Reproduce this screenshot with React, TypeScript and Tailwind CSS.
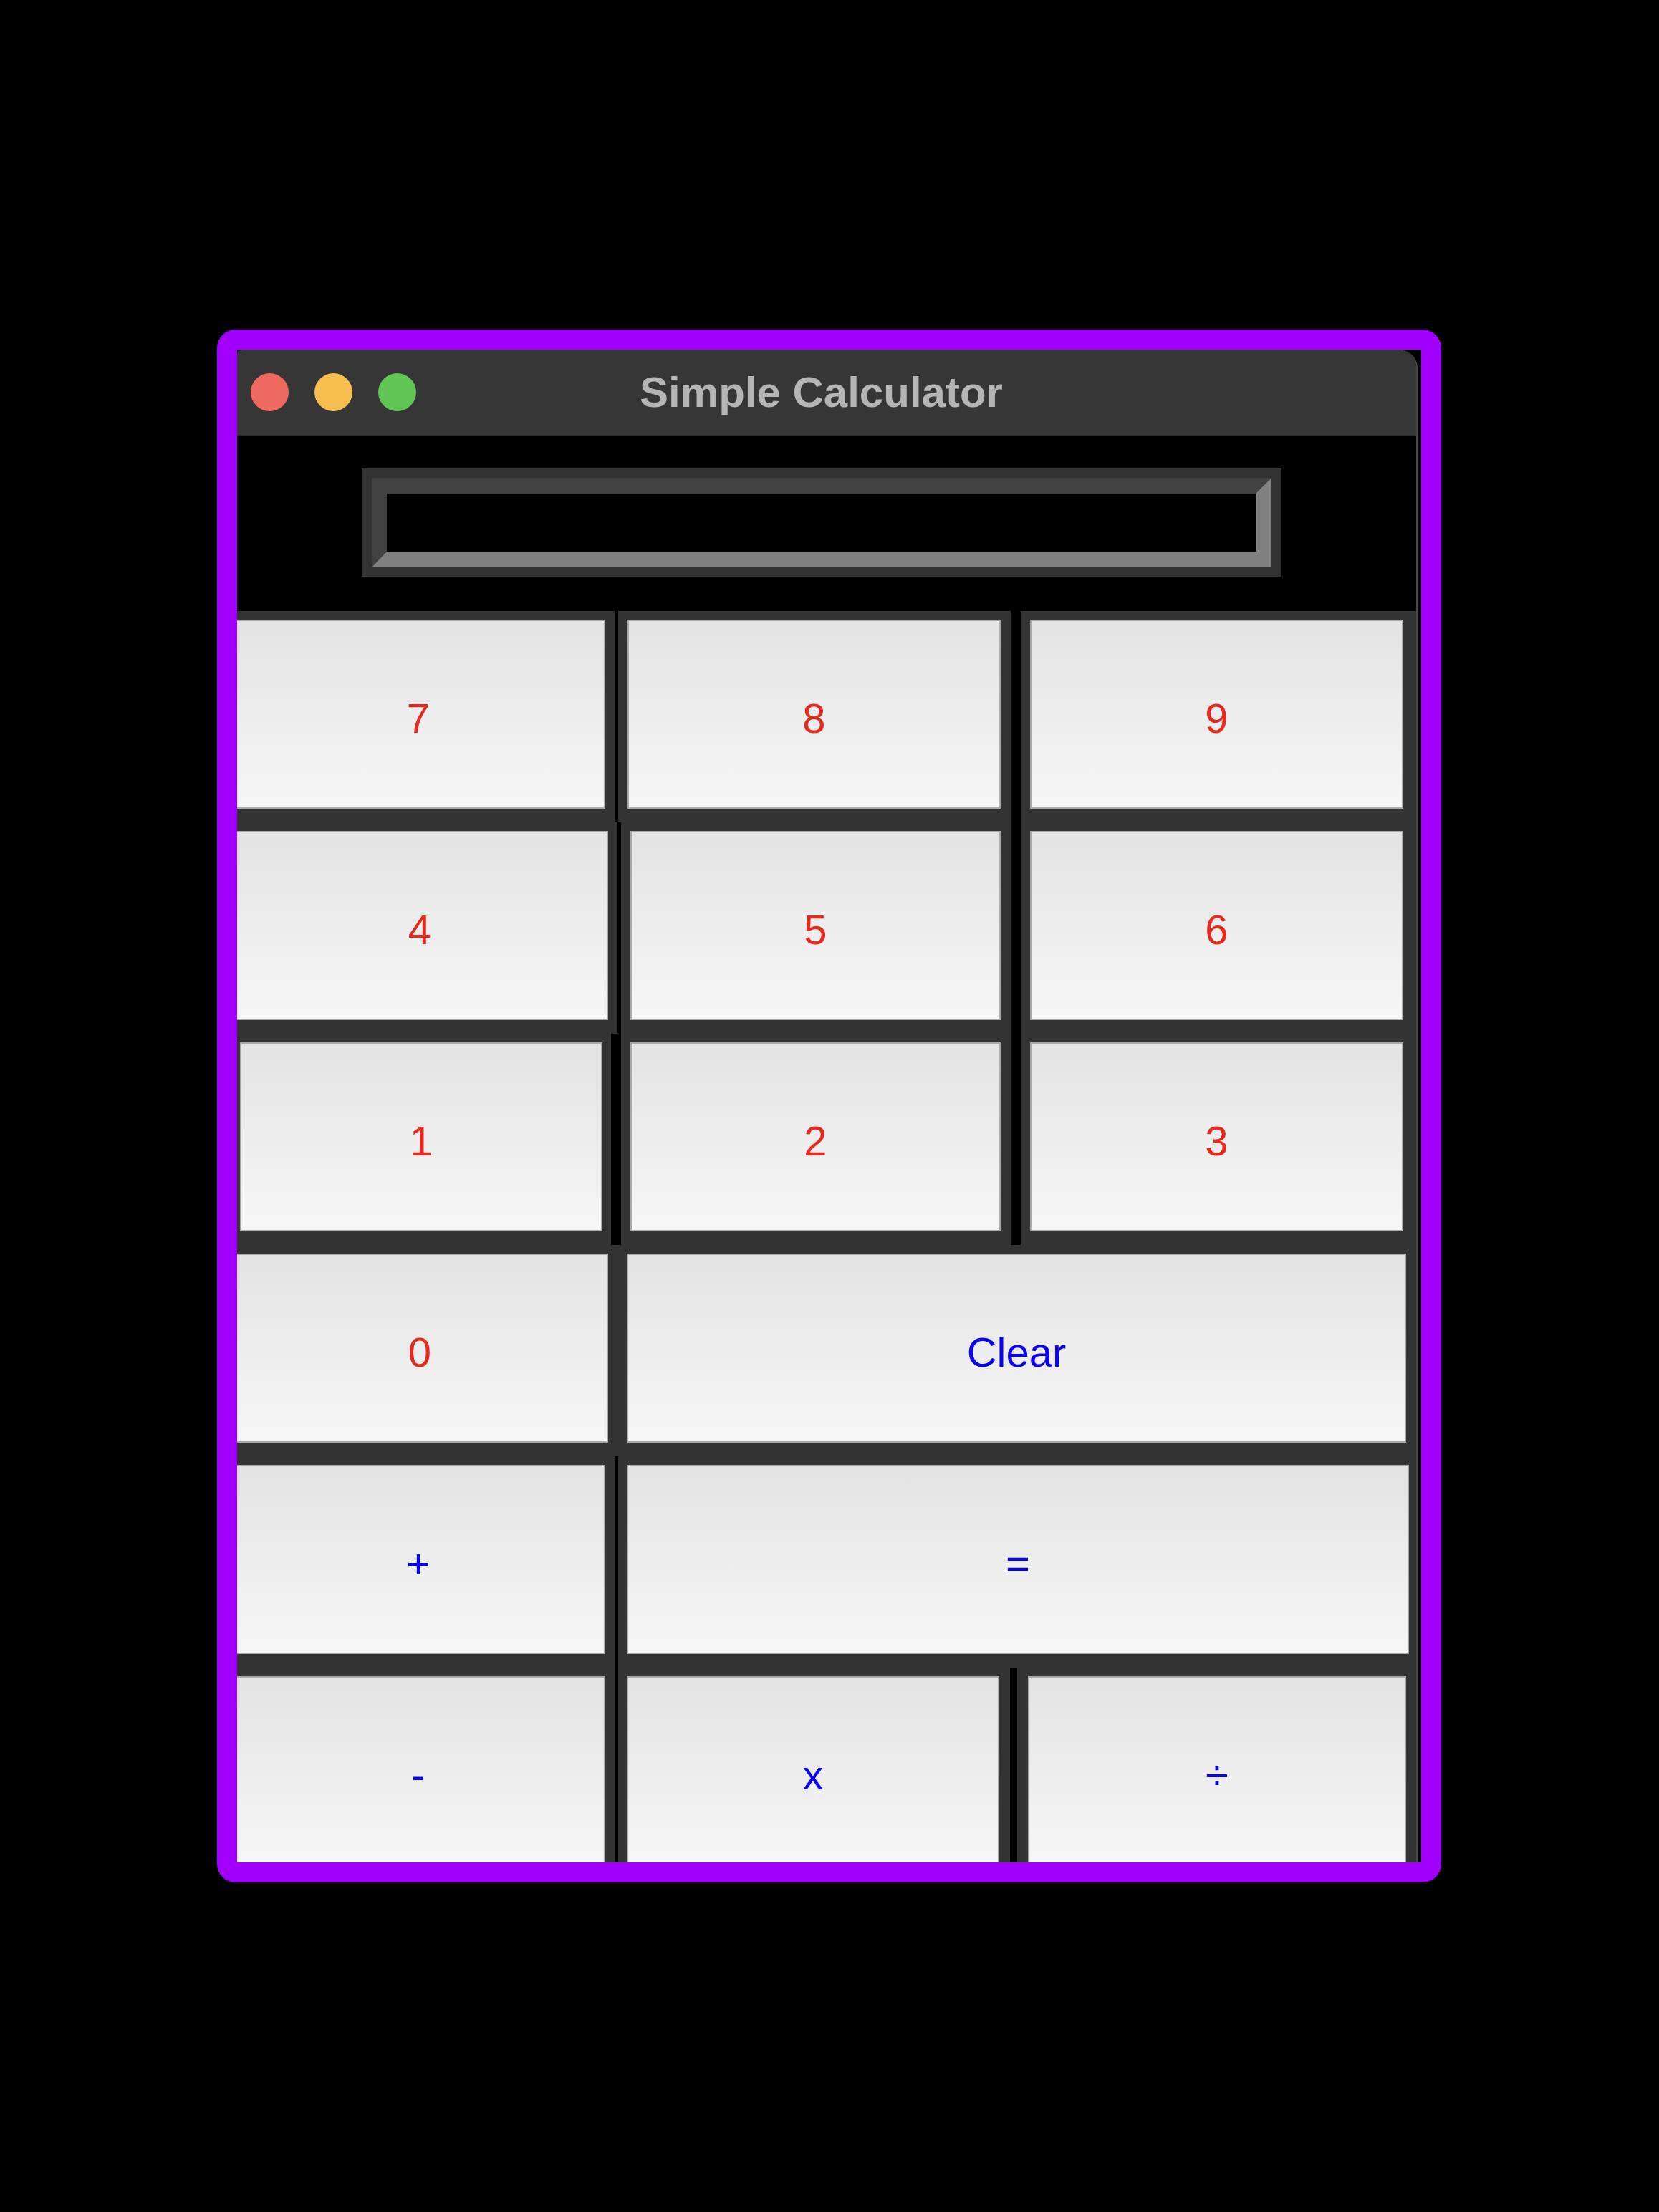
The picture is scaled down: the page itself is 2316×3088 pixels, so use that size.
import React from "react";

type KeyProps = { label: string; w: string; blue?: boolean };

function Key({ label, w, blue }: KeyProps) {
  return (
    <div
      className={`${w} mt-[12px] flex h-[264px] shrink-0 items-center justify-center border-2 border-[#a9a9a9] bg-linear-to-b from-[#e3e3e3] to-[#f6f6f6] pt-[10px] text-[58px] ${
        blue ? "text-[#0c00f0]" : "text-[#e42a1d]"
      }`}
    >
      {label}
    </div>
  );
}

function Frame({ w }: { w: string }) {
  return <div className={`${w} shrink-0`} />;
}

function Strip({ w }: { w: string }) {
  return <div className={`${w} shrink-0 bg-black`} />;
}

export default function App() {
  return (
    <div className="min-h-[3088px] w-[2316px] bg-black pl-[303px] pt-[460px] font-['Liberation_Sans',Arial,sans-serif]">
      <div className="h-[2168px] w-[1709px] overflow-hidden rounded-[26px] border-[28px] border-[#a100ff] bg-black">
        <div className="-ml-[15px] h-[2140px] w-[1663px] overflow-hidden rounded-t-[26px] border-r-2 border-[#484848] bg-black">
          {/* title bar */}
          <div className="flex h-[120px] items-center border-b border-[#2a2a2a] bg-[#363636]">
            <div className="flex w-[300px] shrink-0 gap-[36px] pl-[34px]">
              <div className="size-[53px] rounded-full bg-[#ee6a5f]" />
              <div className="size-[53px] rounded-full bg-[#f5be4f]" />
              <div className="size-[53px] rounded-full bg-[#61c554]" />
            </div>
            <div className="flex-1 text-center text-[60px] font-bold text-[#b5b5b5]">
              Simple Calculator
            </div>
            <div className="w-[300px] shrink-0" />
          </div>

          {/* display */}
          <div className="mx-auto mt-[46px] w-[1284px] bg-[#333333] px-[14px] py-[13px]">
            <div className="h-[125px] border-b-[22px] border-l-[21px] border-r-[22px] border-t-[22px] border-b-[#808080] border-l-[#414141] border-r-[#808080] border-t-[#414141] bg-black" />
          </div>

          {/* keys */}
          <div className="mt-[48px]">
            <div className="flex h-[295px] bg-[#333333]">
              <Frame w="w-[7px]" />
              <Key label="7" w="w-[522px]" />
              <Frame w="w-[13px]" />
              <Strip w="w-[5px]" />
              <Frame w="w-[13px]" />
              <Key label="8" w="w-[521px]" />
              <Frame w="w-[14px]" />
              <Strip w="w-[14px]" />
              <Frame w="w-[13px]" />
              <Key label="9" w="w-[521px]" />
            </div>
            <div className="flex h-[295px] bg-[#333333]">
              <Frame w="w-[7px]" />
              <Key label="4" w="w-[526px]" />
              <Frame w="w-[13px]" />
              <Strip w="w-[5px]" />
              <Frame w="w-[13px]" />
              <Key label="5" w="w-[517px]" />
              <Frame w="w-[14px]" />
              <Strip w="w-[14px]" />
              <Frame w="w-[13px]" />
              <Key label="6" w="w-[521px]" />
            </div>
            <div className="flex h-[295px] bg-[#333333]">
              <Frame w="w-[19px]" />
              <Key label="1" w="w-[506px]" />
              <Frame w="w-[12px]" />
              <Strip w="w-[14px]" />
              <Frame w="w-[13px]" />
              <Key label="2" w="w-[517px]" />
              <Frame w="w-[14px]" />
              <Strip w="w-[14px]" />
              <Frame w="w-[13px]" />
              <Key label="3" w="w-[521px]" />
            </div>
            <div className="flex h-[295px] bg-[#333333]">
              <Frame w="w-[7px]" />
              <Key label="0" w="w-[526px]" />
              <Frame w="w-[26px]" />
              <Key label="Clear" w="w-[1088px]" blue />
            </div>
            <div className="flex h-[295px] bg-[#333333]">
              <Frame w="w-[7px]" />
              <Key label="+" w="w-[522px]" blue />
              <Frame w="w-[13px]" />
              <Strip w="w-[5px]" />
              <Frame w="w-[12px]" />
              <Key label="=" w="w-[1092px]" blue />
            </div>
            <div className="flex h-[295px] bg-[#333333]">
              <Frame w="w-[7px]" />
              <Key label="-" w="w-[522px]" blue />
              <Frame w="w-[13px]" />
              <Strip w="w-[5px]" />
              <Frame w="w-[12px]" />
              <Key label="x" w="w-[520px]" blue />
              <Frame w="w-[15px]" />
              <Strip w="w-[10px]" />
              <Frame w="w-[15px]" />
              <Key label="÷" w="w-[528px]" blue />
            </div>
          </div>
        </div>
      </div>
    </div>
  );
}
